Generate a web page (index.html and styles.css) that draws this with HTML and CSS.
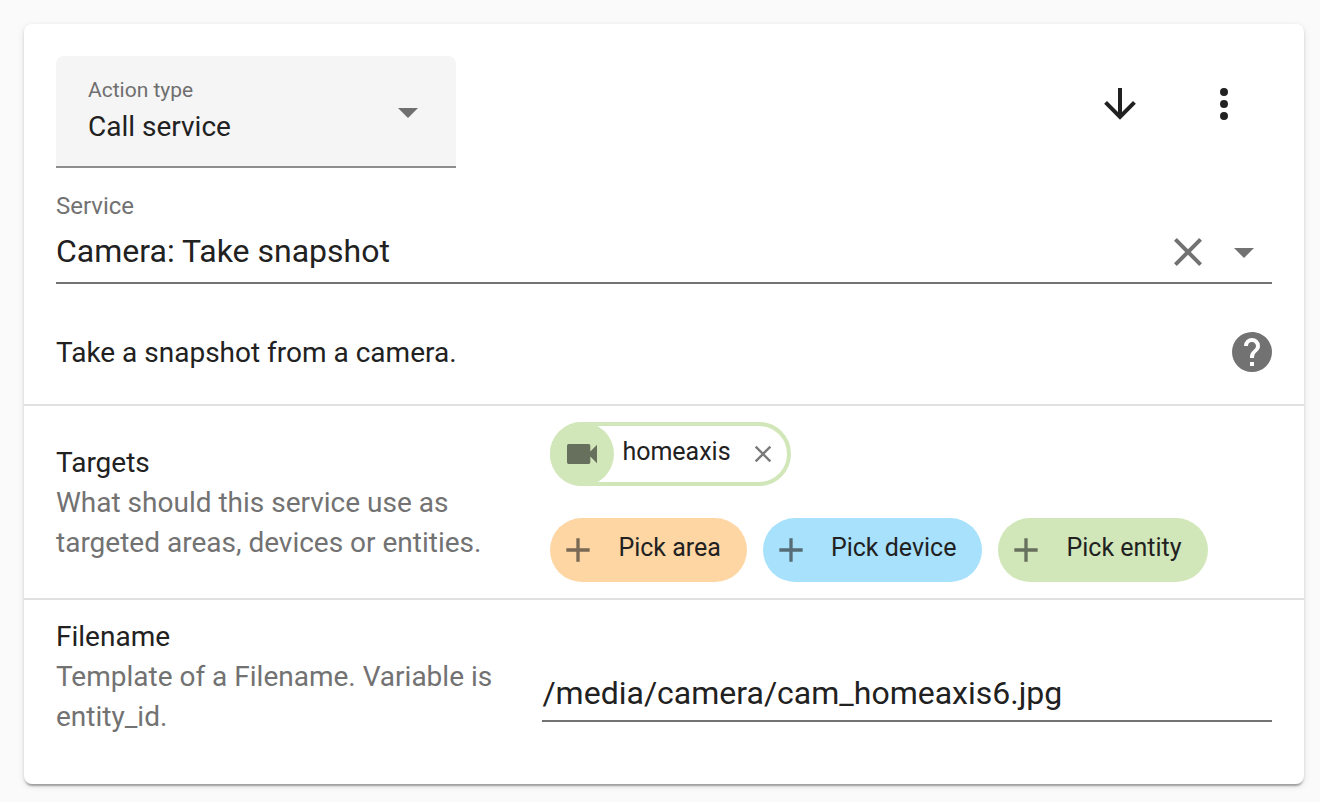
FILE: index.html
```html
<!DOCTYPE html>
<html lang="en">
<head>
    <meta charset="UTF-8">
    <meta name="viewport" content="width=device-width, initial-scale=1.0">
    <title>Automation action</title>
    <link rel="stylesheet" href="styles.css">
</head>
<body>
    <main class="card">
        <div class="header">
            <div class="select-box">
                <div class="select-text">
                    <label for="action-type">Action type</label>
                    <select id="action-type">
                        <option selected>Call service</option>
                        <option>Delay</option>
                        <option>Wait</option>
                    </select>
                </div>
                <svg class="icon" viewBox="0 0 24 24"><path d="M7,10L12,15L17,10H7Z"/></svg>
            </div>
            <div class="header-buttons">
                <button class="icon-button" aria-label="Move down">
                    <svg class="icon" viewBox="0 0 24 24"><path d="M11,4H13V16L18.5,10.5L19.92,11.92L12,19.84L4.08,11.92L5.5,10.5L11,16V4Z"/></svg>
                </button>
                <button class="icon-button" aria-label="More options">
                    <svg class="icon" viewBox="0 0 24 24"><path d="M12,16A2,2 0 0,1 14,18A2,2 0 0,1 12,20A2,2 0 0,1 10,18A2,2 0 0,1 12,16M12,10A2,2 0 0,1 14,12A2,2 0 0,1 12,14A2,2 0 0,1 10,12A2,2 0 0,1 12,10M12,4A2,2 0 0,1 14,6A2,2 0 0,1 12,8A2,2 0 0,1 10,6A2,2 0 0,1 12,4Z"/></svg>
                </button>
            </div>
        </div>

        <div class="service">
            <label for="service">Service</label>
            <div class="field">
                <input type="text" id="service" value="Camera: Take snapshot">
                <button class="field-button" aria-label="Clear">
                    <svg class="icon" viewBox="0 0 24 24"><path d="M19,6.41L17.59,5L12,10.59L6.41,5L5,6.41L10.59,12L5,17.59L6.41,19L12,13.41L17.59,19L19,17.59L13.41,12L19,6.41Z"/></svg>
                </button>
                <button class="field-button" aria-label="Show services">
                    <svg class="icon" viewBox="0 0 24 24"><path d="M7,10L12,15L17,10H7Z"/></svg>
                </button>
            </div>
        </div>

        <div class="description">
            <p>Take a snapshot from a camera.</p>
            <button class="help" aria-label="Help">
                <svg viewBox="2 2 20 20"><path d="M15.07,11.25L14.17,12.17C13.45,12.89 13,13.5 13,15H11V14.5C11,13.39 11.45,12.39 12.17,11.67L13.41,10.41C13.78,10.05 14,9.55 14,9C14,7.89 13.1,7 12,7A2,2 0 0,0 10,9H8A4,4 0 0,1 12,5A4,4 0 0,1 16,9C16,9.88 15.64,10.67 15.07,11.25M13,19H11V17H13M12,2A10,10 0 0,0 2,12A10,10 0 0,0 12,22A10,10 0 0,0 22,12C22,6.47 17.5,2 12,2Z"/></svg>
            </button>
        </div>

        <div class="row">
            <div class="row-text">
                <h2>Targets</h2>
                <p>What should this service use as targeted areas, devices or entities.</p>
            </div>
            <div class="row-content">
                <div class="chips">
                    <div class="chip selected">
                        <span class="chip-icon">
                            <svg viewBox="0 0 24 24"><path d="M17,10.5V7A1,1 0 0,0 16,6H4A1,1 0 0,0 3,7V17A1,1 0 0,0 4,18H16A1,1 0 0,0 17,17V13.5L21,17.5V6.5L17,10.5Z"/></svg>
                        </span>
                        <span class="chip-text">homeaxis</span>
                        <button class="remove" aria-label="Remove homeaxis">
                            <svg viewBox="0 0 24 24"><path d="M19,6.41L17.59,5L12,10.59L6.41,5L5,6.41L10.59,12L5,17.59L6.41,19L12,13.41L17.59,19L19,17.59L13.41,12L19,6.41Z"/></svg>
                        </button>
                    </div>
                </div>
                <div class="chips">
                    <button class="chip area">
                        <svg viewBox="0 0 24 24"><path d="M19,13H13V19H11V13H5V11H11V5H13V11H19V13Z"/></svg>
                        <span class="chip-text">Pick area</span>
                    </button>
                    <button class="chip device">
                        <svg viewBox="0 0 24 24"><path d="M19,13H13V19H11V13H5V11H11V5H13V11H19V13Z"/></svg>
                        <span class="chip-text">Pick device</span>
                    </button>
                    <button class="chip entity">
                        <svg viewBox="0 0 24 24"><path d="M19,13H13V19H11V13H5V11H11V5H13V11H19V13Z"/></svg>
                        <span class="chip-text">Pick entity</span>
                    </button>
                </div>
            </div>
        </div>

        <div class="row">
            <div class="row-text">
                <h2><label for="filename">Filename</label></h2>
                <p>Template of a Filename. Variable is entity_id.</p>
            </div>
            <div class="row-content">
                <div class="field filename">
                    <input type="text" id="filename" value="/media/camera/cam_homeaxis6.jpg">
                </div>
            </div>
        </div>
    </main>
</body>
</html>
```

FILE: styles.css
```css
* {
    box-sizing: border-box;
}
body {
    margin: 0;
    padding: 24px 16px 16px 24px;
    background-color: #fafafa;
    color: #212121;
    font-family: Roboto, sans-serif;
    font-size: 28px;
    line-height: 40px;
}
h2, p {
    margin: 0;
    font-size: 28px;
    font-weight: 400;
}
button {
    display: flex;
    align-items: center;
    justify-content: center;
    padding: 0;
    border: none;
    background: none;
    color: inherit;
    font: inherit;
    cursor: pointer;
}
input, select {
    border: none;
    outline: none;
    padding: 0;
    background: none;
    color: inherit;
    font: inherit;
    appearance: none;
}
svg {
    flex: none;
    fill: currentColor;
}
.card {
    padding: 32px 0;
    border-radius: 8px;
    background-color: #fff;
    box-shadow: 0 4px 2px -2px rgba(0, 0, 0, 0.2), 0 2px 2px rgba(0, 0, 0, 0.14), 0 2px 6px rgba(0, 0, 0, 0.12);
}
.icon {
    width: 48px;
    height: 48px;
}

/* action type and menu */
.header {
    display: flex;
    justify-content: space-between;
    padding: 0 32px;
}
.select-box {
    display: flex;
    align-items: center;
    width: 400px;
    height: 112px;
    padding: 2px 24px 0 32px;
    border-bottom: 2px solid #8e8e8e;
    border-radius: 8px 8px 0 0;
    background-color: #f5f5f5;
}
.select-box .icon {
    color: #6f6f6f;
}
.select-text {
    display: flex;
    flex: 1;
    flex-direction: column;
    padding-bottom: 4px;
}
.select-text label {
    color: #6f6f6f;
    font-size: 21px;
    line-height: 34px;
}
.select-text select {
    height: 40px;
}
.header-buttons {
    display: flex;
    gap: 8px;
}
.icon-button {
    width: 96px;
    height: 96px;
}

/* service picker */
.service {
    padding: 20px 32px 0;
}
.service label {
    display: block;
    color: #727272;
    font-size: 24px;
    line-height: 36px;
}
.field {
    display: flex;
    align-items: center;
    padding-bottom: 2px;
    border-bottom: 2px solid #727272;
}
.field input {
    flex: 1;
    min-width: 0;
    height: 48px;
    padding-bottom: 2px;
    font-size: 32px;
}
.field-button {
    width: 56px;
    height: 56px;
    color: #727272;
}
.description {
    display: flex;
    align-items: center;
    justify-content: space-between;
    padding: 48px 32px 32px;
}
.description p {
    margin-bottom: -2px;
}
.help {
    width: 40px;
    height: 40px;
    color: #727272;
}
.help svg {
    width: 40px;
    height: 40px;
}

/* settings rows */
.row {
    display: flex;
    align-items: center;
    padding: 16px 32px;
    border-top: 2px solid #e0e0e0;
}
.row-text {
    flex: 1;
    padding: 1px 32px 0 0;
}
.row-text p {
    margin-bottom: -1px;
    color: #727272;
}
.row-content {
    display: flex;
    flex-direction: column;
    gap: 32px;
    width: 60%;
}
.filename {
    padding-top: 40px;
}

/* chips */
.chips {
    display: flex;
    flex-wrap: wrap;
    gap: 16px;
    padding: 0 8px;
}
.chip {
    display: flex;
    align-items: center;
    height: 64px;
    padding: 0 26px 0 8px;
    border-radius: 32px;
    font-size: 25px;
}
.chip svg {
    width: 40px;
    height: 40px;
    opacity: 0.6;
}
.chip-text {
    padding: 0 0 4px 20px;
}
.area {
    background-color: #fed6a4;
}
.device {
    background-color: #a8e1fb;
}
.entity {
    background-color: #d2e7b9;
}
.selected {
    padding: 0 10px 0 0;
    border: 4px solid #d2e7b9;
}
.selected .chip-icon {
    display: flex;
    align-items: center;
    justify-content: center;
    width: 64px;
    height: 64px;
    margin-left: -4px;
    border-radius: 50%;
    background-color: #d2e7b9;
}
.selected .chip-text {
    padding-left: 8px;
}
.remove {
    margin-left: 18px;
}
.chip .remove svg {
    width: 28px;
    height: 28px;
}
```
